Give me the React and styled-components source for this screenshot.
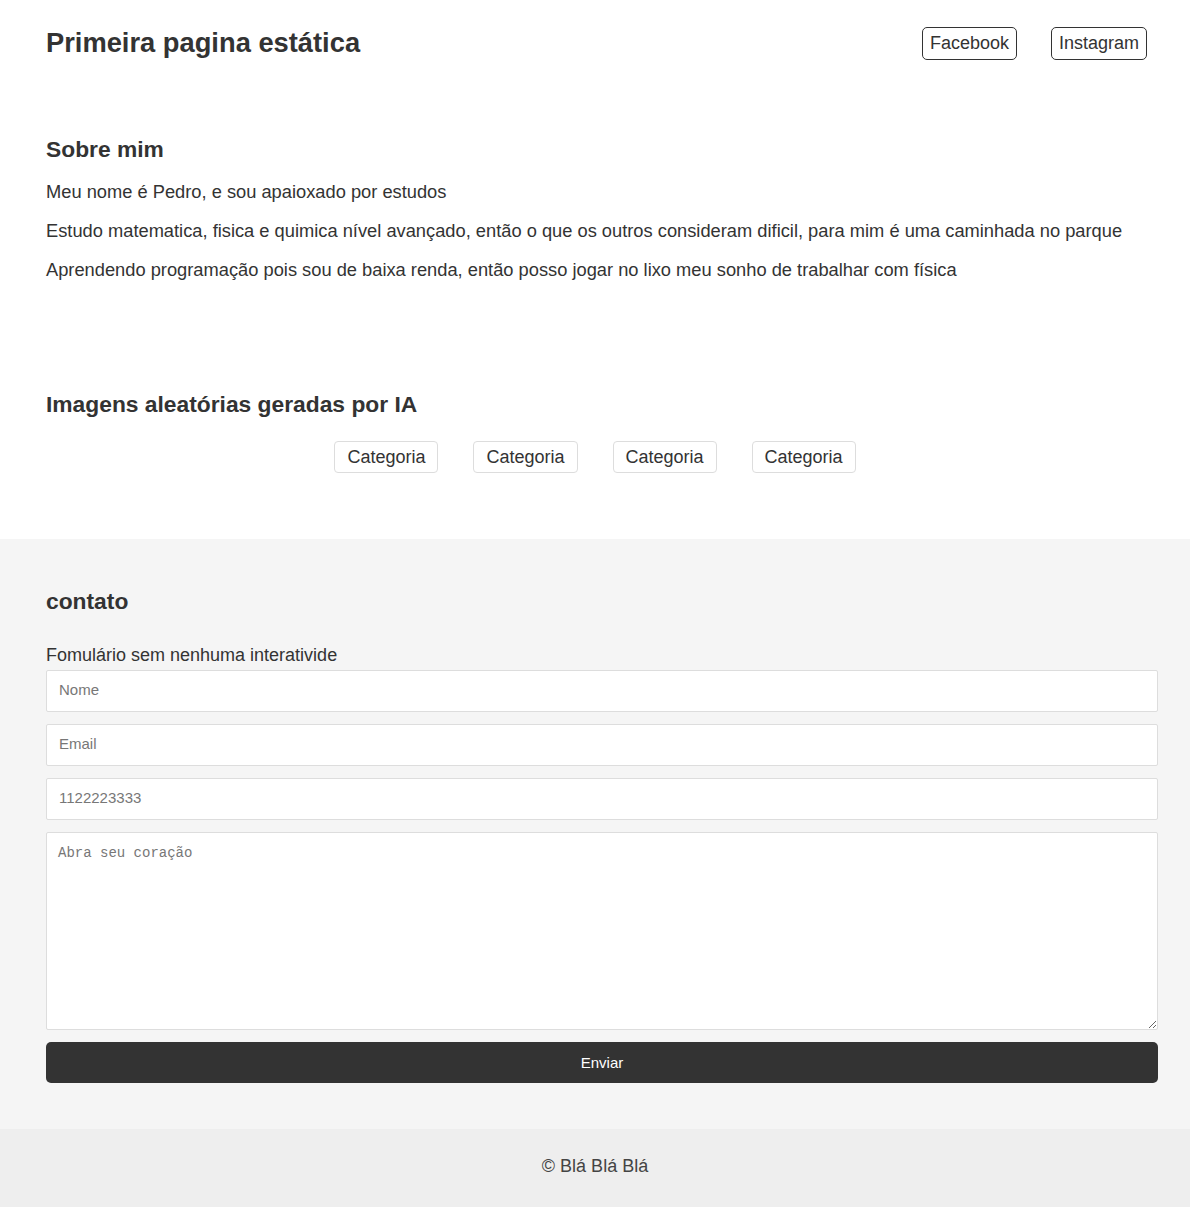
import React from "react";
import styled, { createGlobalStyle } from "styled-components";

const Global = createGlobalStyle`
    body{
        margin: 0;
        background: #ffffff;
        font-family: "Liberation Sans", Arial, sans-serif;
        color: #333;
    }
    *{
        box-sizing: border-box;
    }
`;

const App = () => {
    const categorias = ["Categoria", "Categoria", "Categoria", "Categoria"];
    return(
        <>
            <Global />
            <Header>
                <Title>Primeira pagina estática</Title>
                <SocialList>
                    <li><SocialLink href="#">Facebook</SocialLink></li>
                    <li><SocialLink href="#">Instagram</SocialLink></li>
                </SocialList>
            </Header>
            <About>
                <SectionTitle>Sobre mim</SectionTitle>
                <Text>Meu nome é Pedro, e sou apaioxado por estudos</Text>
                <Text>Estudo matematica, fisica e quimica nível avançado, então o que os outros consideram dificil, para mim é uma caminhada no parque</Text>
                <Text>Aprendendo programação pois sou de baixa renda, então posso jogar no lixo meu sonho de trabalhar com física</Text>
            </About>
            <Gallery>
                <SectionTitle>Imagens aleatórias geradas por IA</SectionTitle>
                <Categories>
                    {categorias.map((c, i) => (
                        <CategoryButton key={i}>{c}</CategoryButton>
                    ))}
                </Categories>
            </Gallery>
            <Contact>
                <SectionTitle>contato</SectionTitle>
                <FormLabel>Fomulário sem nenhuma interativide</FormLabel>
                <Form onSubmit={(e) => e.preventDefault()}>
                    <Input type="text" placeholder="Nome" />
                    <Input type="email" placeholder="Email" />
                    <Input type="tel" placeholder="1122223333" />
                    <TextArea placeholder="Abra seu coração" />
                    <SendButton type="submit">Enviar</SendButton>
                </Form>
            </Contact>
            <Footer>© Blá Blá Blá</Footer>
        </>
    );
};

const Header = styled.header`
    height: 86px;
    display: flex;
    justify-content: space-between;
    align-items: center;
    padding: 0 43px 0 46px;
`;

const Title = styled.h1`
    margin: 0;
    font-size: 27.3px;
    line-height: 32px;
    font-weight: bold;
    color: #333;
`;

const SocialList = styled.ul`
    display: flex;
    list-style: none;
    margin: 0;
    padding: 0;
    gap: 34px;
`;

const SocialLink = styled.a`
    display: block;
    font-size: 18px;
    line-height: 21px;
    padding: 5px 7px;
    border: 1px solid #333;
    border-radius: 5px;
    color: #333;
    text-decoration: none;
`;

const About = styled.section`
    padding: 50px 46px 0 46px;
`;

const SectionTitle = styled.h2`
    margin: 0;
    font-size: 22.8px;
    line-height: 26px;
    font-weight: bold;
    color: #333;
`;

const Text = styled.p`
    margin: 16px 0 0 0;
    font-size: 18.3px;
    line-height: 23px;
    color: #333;
    &:first-of-type{
        margin-top: 18px;
    }
`;

const Gallery = styled.section`
    padding: 110px 46px 66px 46px;
`;

const Categories = styled.div`
    display: flex;
    justify-content: center;
    gap: 35px;
    margin-top: 24px;
`;

const CategoryButton = styled.button`
    font-family: "Liberation Sans", Arial, sans-serif;
    font-size: 18px;
    line-height: 20px;
    padding: 5px 12px;
    background: #ffffff;
    color: #333;
    border: 1px solid #ddd;
    border-radius: 4px;
`;

const Contact = styled.section`
    background: #f5f5f5;
    padding: 49px 32px 46px 46px;
`;

const FormLabel = styled.p`
    margin: 31px 0 4px 0;
    font-size: 18px;
    line-height: 21px;
    color: #333;
`;

const Form = styled.form`
    display: flex;
    flex-direction: column;
    gap: 12px;
`;

const Input = styled.input`
    height: 42px;
    width: 100%;
    padding: 0 12px 3px 12px;
    font-family: "Liberation Sans", Arial, sans-serif;
    font-size: 15px;
    color: #333;
    background: #ffffff;
    border: 1px solid #ddd;
    border-radius: 2px;
    &::placeholder{
        color: #777;
    }
`;

const TextArea = styled.textarea`
    height: 198px;
    width: 100%;
    padding: 12px 11px;
    font-family: "Liberation Mono", monospace;
    font-size: 14px;
    background: #ffffff;
    border: 1px solid #ddd;
    border-radius: 2px;
    &::placeholder{
        color: #777;
    }
`;

const SendButton = styled.button`
    height: 41px;
    width: 100%;
    border: none;
    border-radius: 5px;
    background: #333;
    color: #ffffff;
    font-family: "Liberation Sans", Arial, sans-serif;
    font-size: 15px;
`;

const Footer = styled.footer`
    background: #eeeeee;
    text-align: center;
    font-size: 18px;
    line-height: 22px;
    padding: 26px 0 30px 0;
    color: #444;
`;

export default App;
